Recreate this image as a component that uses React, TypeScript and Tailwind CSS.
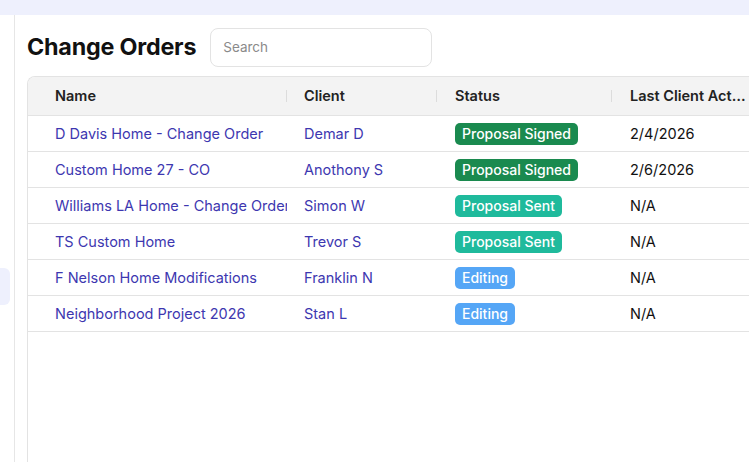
import React from "react";

type Status = "Proposal Signed" | "Proposal Sent" | "Editing";

interface ChangeOrder {
  name: string;
  client: string;
  status: Status;
  lastAction: string;
}

const ORDERS: ChangeOrder[] = [
  { name: "D Davis Home - Change Order", client: "Demar D", status: "Proposal Signed", lastAction: "2/4/2026" },
  { name: "Custom Home 27 - CO", client: "Anothony S", status: "Proposal Signed", lastAction: "2/6/2026" },
  { name: "Williams LA Home - Change Order", client: "Simon W", status: "Proposal Sent", lastAction: "N/A" },
  { name: "TS Custom Home", client: "Trevor S", status: "Proposal Sent", lastAction: "N/A" },
  { name: "F Nelson Home Modifications", client: "Franklin N", status: "Editing", lastAction: "N/A" },
  { name: "Neighborhood Project 2026", client: "Stan L", status: "Editing", lastAction: "N/A" },
];

// status -> badge colour
const BADGE: Record<Status, string> = {
  "Proposal Signed": "bg-[#1a8a4f]",
  "Proposal Sent": "bg-[#1fba9c]",
  Editing: "bg-[#55a6f6]",
};

const GRID = "grid grid-cols-[259px_150px_175px_140px]";

const HeaderCell = ({ label, pad, divider }: { label: string; pad: string; divider?: boolean }) => (
  <div className={`relative flex items-center h-full ${pad} pr-[3px] overflow-hidden`}>
    <span className="truncate">{label}</span>
    {divider && <span className="absolute right-0 top-1/2 -translate-y-1/2 w-px h-3 bg-[#dcdcdc]" />}
  </div>
);

export default function App() {
  return (
    <div
      className="w-[749px] h-[462px] overflow-hidden bg-white flex flex-col"
      style={{ fontFamily: "Inter, 'Noto Sans', sans-serif" }}
    >
      {/* top bar */}
      <div className="h-[15px] shrink-0 bg-[#eef0fd]" />

      <div className="flex flex-1 min-h-0">
        {/* sidebar (cut off) */}
        <div className="w-[15px] shrink-0 border-r border-[#e6e6e6] flex flex-col pt-[253px]">
          <div className="w-[10px] h-[37px] rounded-r-md bg-[#eef0fd]" />
        </div>

        {/* main */}
        <div className="flex-1 min-w-0 flex flex-col pl-3 pt-[13px]">
          <div className="flex items-center h-[39px] gap-[14px]">
            <h1 className="text-[23.3px] font-bold text-[#111] tracking-[-0.2px]">Change Orders</h1>
            <div className="w-[222px] h-[39px] rounded-lg border border-[#e3e3e3] flex items-center px-3">
              <span className="text-[13.5px] text-[#8a8a8a]">Search</span>
            </div>
          </div>

          {/* table */}
          <div className="mt-[9px] flex-1 border-l border-t border-[#e3e3e3] rounded-tl-lg overflow-hidden text-[14.5px]">
            <div className={`${GRID} h-[39px] bg-[#f3f3f3] border-b border-[#e3e3e3] font-semibold text-[#222]`}>
              <HeaderCell label="Name" pad="pl-[27px]" divider />
              <HeaderCell label="Client" pad="pl-[17px]" divider />
              <HeaderCell label="Status" pad="pl-[18px]" divider />
              <HeaderCell label="Last Client Action" pad="pl-[18px]" />
            </div>

            {ORDERS.map((o) => (
              <div key={o.name} className={`${GRID} h-[36px] border-b border-[#e3e3e3]`}>
                <div className="flex items-center pl-[27px] overflow-hidden whitespace-nowrap text-[#3d37b0]">
                  {o.name}
                </div>
                <div className="flex items-center pl-[17px] overflow-hidden whitespace-nowrap text-[#3d37b0]">
                  {o.client}
                </div>
                <div className="flex items-center pl-[18px]">
                  <span className={`${BADGE[o.status]} text-white text-[14px] font-medium rounded-[5px] px-[7px] h-[22px] flex items-center`}>
                    {o.status}
                  </span>
                </div>
                <div className="flex items-center pl-[18px] text-[#111]">{o.lastAction}</div>
              </div>
            ))}
          </div>
        </div>
      </div>
    </div>
  );
}
